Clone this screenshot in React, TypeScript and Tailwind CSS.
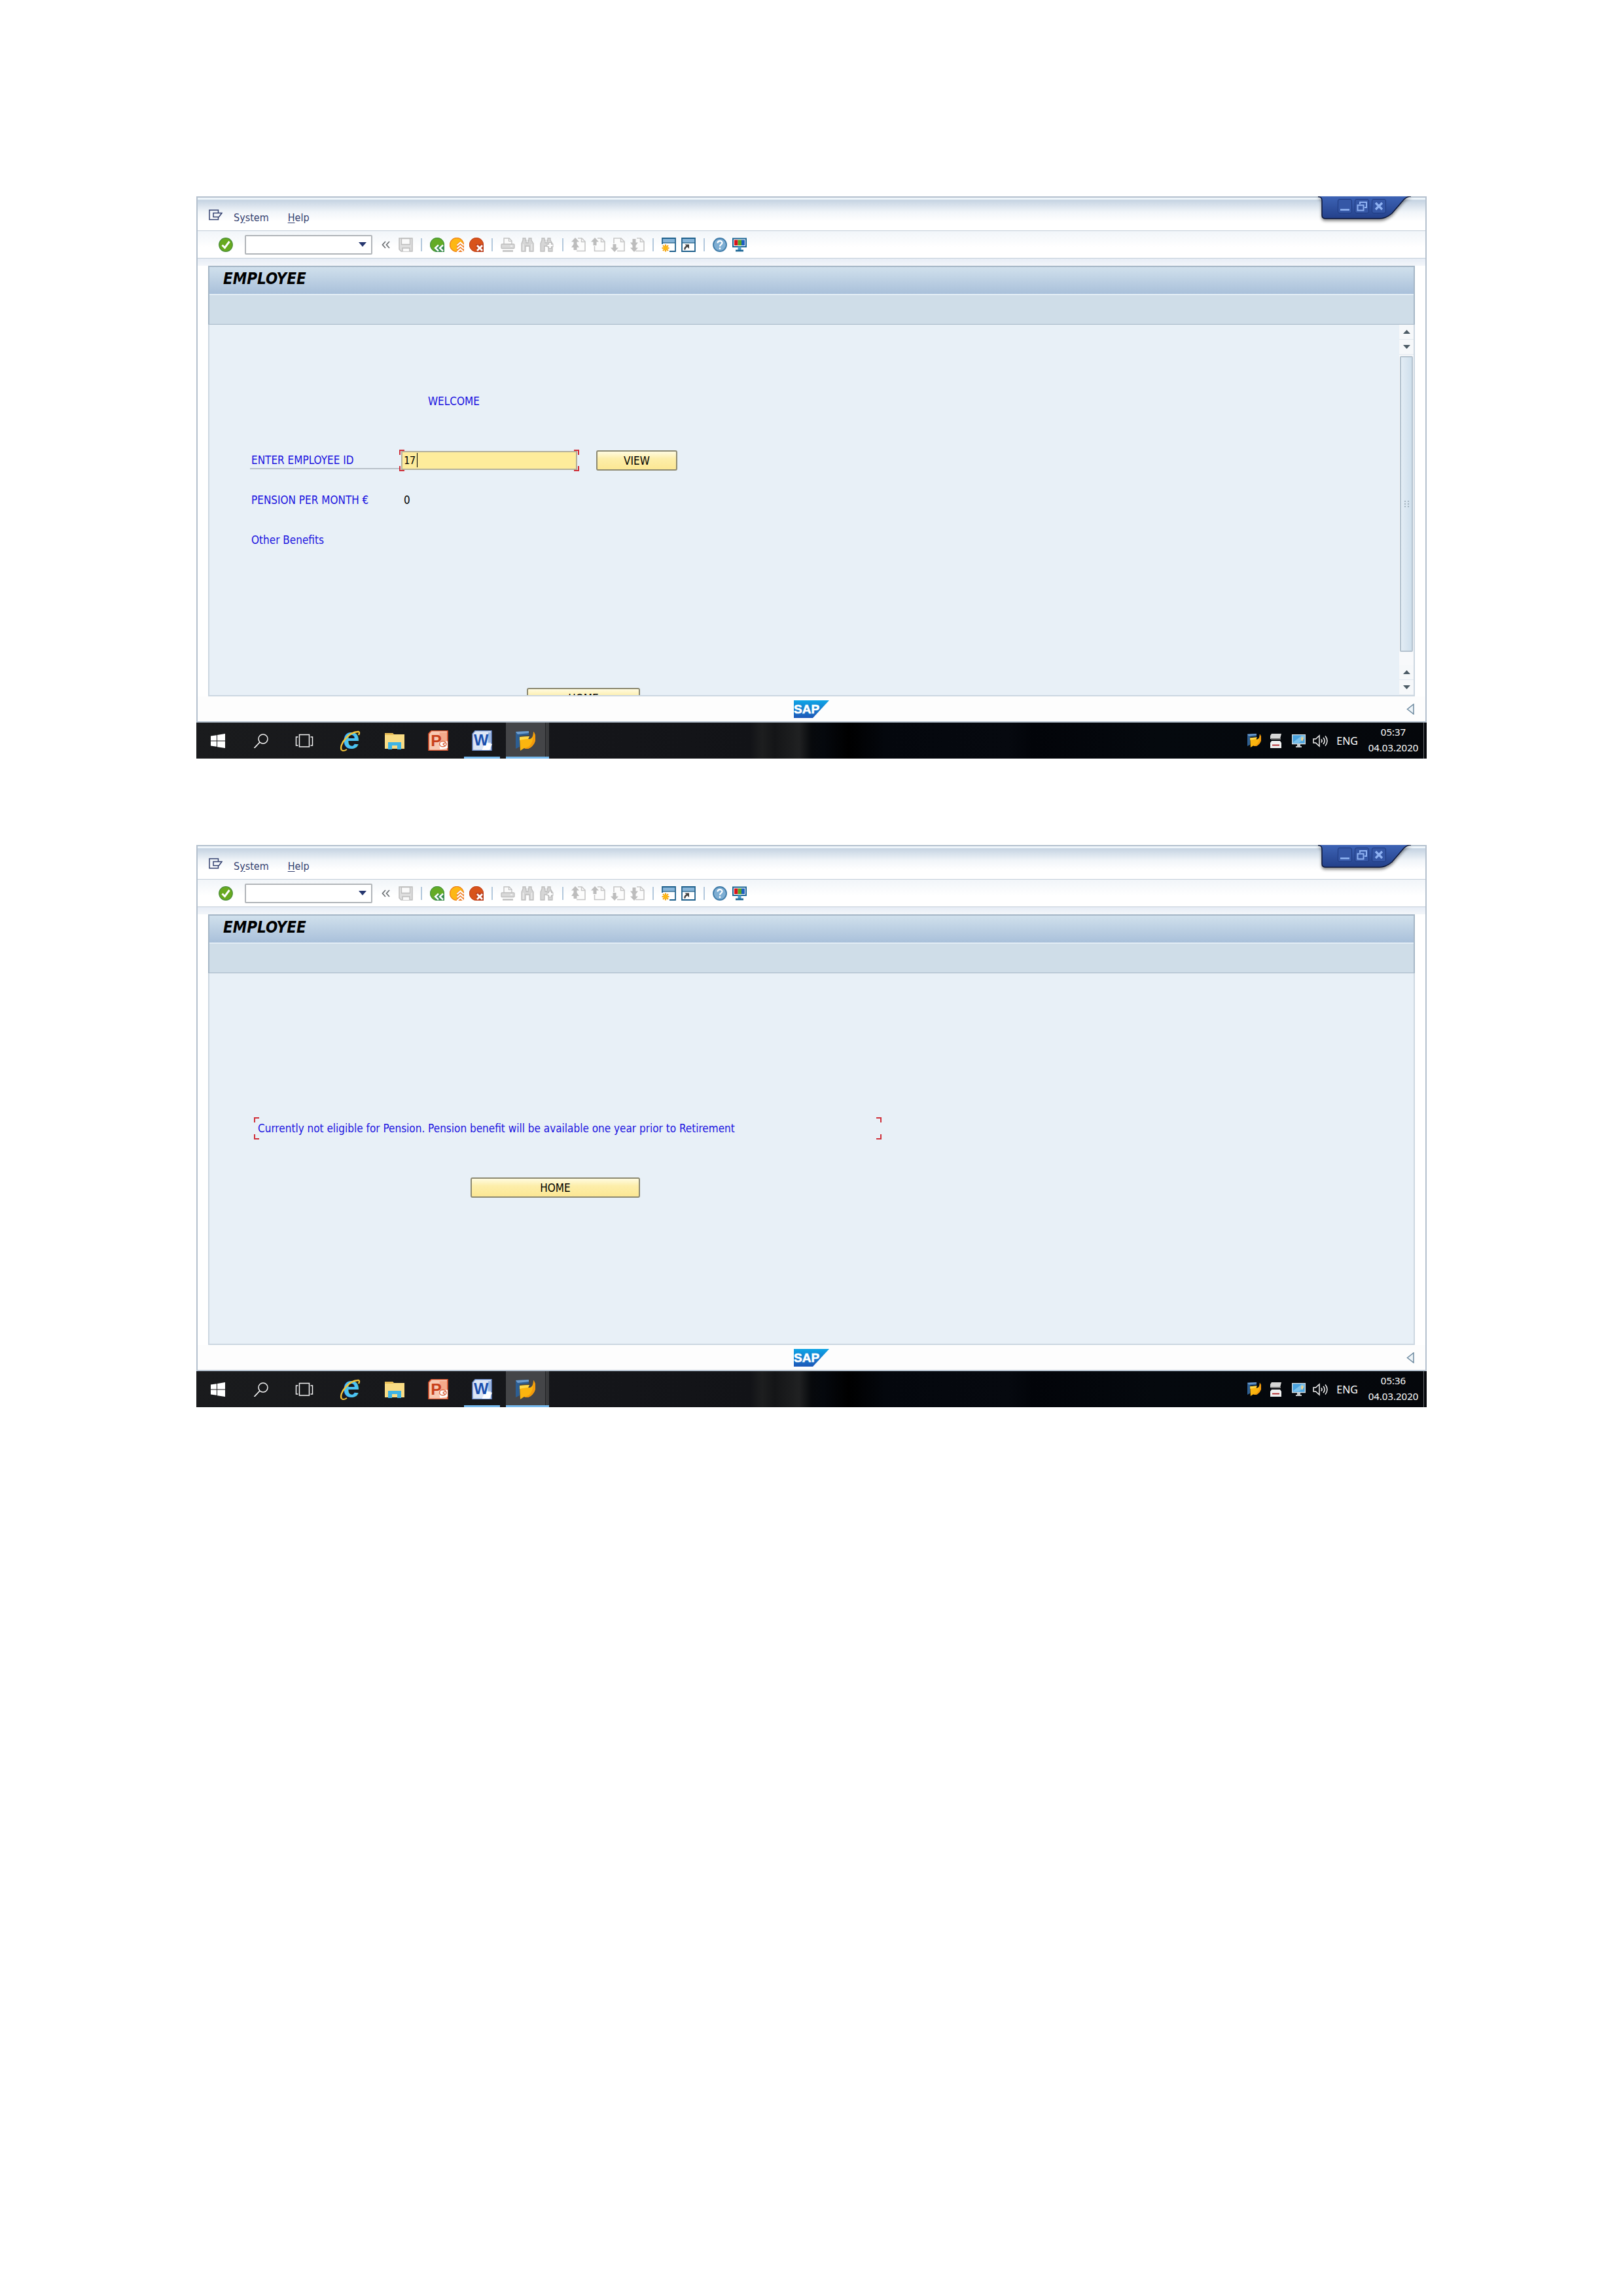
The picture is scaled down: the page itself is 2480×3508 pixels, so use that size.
import React from "react";

type IconProps = { children: React.ReactNode; className?: string; box?: string };

function Svg({ children, className = "size-[22px]", box = "0 0 22 22" }: IconProps) {
  return (
    <svg viewBox={box} className={className} fill="none" aria-hidden="true">
      {children}
    </svg>
  );
}

/* ---------- toolbar icons ---------- */

const CheckIcon = () => (
  <Svg>
    <circle cx="11" cy="11" r="10.3" fill="#68a91f" stroke="#4b8f3a" strokeWidth="1.2" />
    <path d="M5.5 11.5l4 4 7-9.5" stroke="#fff" strokeWidth="3" />
  </Svg>
);

const SaveIcon = () => (
  <Svg>
    <path d="M1 1h20v20H4l-3-3z" fill="#dedede" stroke="#bdbdbd" strokeWidth="1.5" />
    <path d="M4.500 1.500h13v9h-13z" fill="#fafafa" stroke="#bdbdbd" strokeWidth="1.300" />
    <path d="M6 21v-5h11v5" fill="#fafafa" stroke="#bdbdbd" strokeWidth="1.500" />
  </Svg>
);

const BackIcon = () => (
  <Svg>
    <path d="M22 22H11A11 11 0 1 1 22 11z" fill="#64ab25" />
    <path d="M21.500 21.500H11A10.500 10.500 0 1 1 21.500 11z" stroke="#3f8f4a" strokeWidth="1" />
    <path d="M21.500 12v9.500H9L6 16l5-4z" fill="#3c8d52" />
    <path d="M13 11.500l-5 4.500 5 4.500M20 11.500L15 16l5 4.500" stroke="#fff" strokeWidth="2.400" />
  </Svg>
);

const ExitIcon = () => (
  <Svg>
    <path d="M22 22H11A11 11 0 1 1 22 11z" fill="#fdb714" />
    <path d="M21.500 21.500H11A10.500 10.500 0 1 1 21.500 11z" stroke="#ee7f22" strokeWidth="1.200" />
    <path d="M11 10l5-4.500 6 5V22H11z" fill="#ef7d25" />
    <path d="M11.500 12l5-4.500 5 4.500M11.500 17l5-4.500 5 4.500M11.500 22l5-4.500 5 4.500" stroke="#fff" strokeWidth="2.200" />
  </Svg>
);

const CancelIcon = () => (
  <Svg>
    <path d="M22 22H11A11 11 0 1 1 22 11z" fill="#d8531b" />
    <path d="M21.500 21.500H11A10.500 10.500 0 1 1 21.500 11z" stroke="#bf4520" strokeWidth="1" />
    <path d="M10 10h12v12H12z" fill="#bb3f1e" />
    <path d="M12 12l8 8M20 12l-8 8" stroke="#fff" strokeWidth="2.800" />
  </Svg>
);

const PrintIcon = () => (
  <Svg>
    <path d="M5 10V1h8l4 4v5" fill="#fafafa" stroke="#c0c0c0" strokeWidth="1.400" />
    <path d="M12.500 1v4.500H17" stroke="#c0c0c0" strokeWidth="1.200" />
    <rect x="1" y="10" width="20" height="6.500" rx="1" fill="#d9d9d9" stroke="#bdbdbd" strokeWidth="1.300" />
    <path d="M3 20.500h16" stroke="#bdbdbd" strokeWidth="2.400" />
    <path d="M15 13h3" stroke="#fff" strokeWidth="1.200" />
  </Svg>
);

const FindIcon = () => (
  <Svg>
    <path d="M4 1h4v3h1v4h3V4h1V1h4v3l3 5v12h-6v-8H8v8H2V9l2-5z" fill="#d6d6d6" stroke="#bcbcbc" strokeWidth="1.300" />
    <path d="M4.500 10v10M17.500 10v10" stroke="#efefef" strokeWidth="1.300" />
  </Svg>
);

const FindNextIcon = () => (
  <Svg>
    <path d="M3 1h4v3h1v4h3V4h1V1h4v3l3 5v12h-6v-8H7v8H1V9l2-5z" fill="#d6d6d6" stroke="#bcbcbc" strokeWidth="1.300" />
    <path d="M15.500 7v10M10.500 12h10" stroke="#bcbcbc" strokeWidth="5" />
    <path d="M15.500 8v8M11.500 12h8" stroke="#fff" strokeWidth="2.600" />
  </Svg>
);

const PageOutline = () => (
  <>
    <path d="M10 1h6l5 5v14.500H8" fill="#fcfcfc" stroke="#c6c6c6" strokeWidth="1.600" />
    <path d="M15.500 1v5.500H21" stroke="#c6c6c6" strokeWidth="1.500" />
  </>
);

const FirstPageIcon = () => (
  <Svg>
    <PageOutline />
    <path d="M6 0l6 6.500H8.500V10l3.500 5H8.500v4h-5v-4H0l3.500-5V6.500H0z" fill="#bdbdbd" />
  </Svg>
);

const PrevPageIcon = () => (
  <Svg>
    <path d="M10 1h6l5 5v14.500H5.500V13" fill="#fcfcfc" stroke="#c6c6c6" strokeWidth="1.600" />
    <path d="M15.500 1v5.500H21" stroke="#c6c6c6" strokeWidth="1.500" />
    <path d="M6 0l6 6.500H8.500V12h-5V6.500H0z" fill="#bdbdbd" />
  </Svg>
);

const NextPageIcon = () => (
  <Svg>
    <path d="M5 9V1h11l5 5v14.500H10" fill="#fcfcfc" stroke="#c6c6c6" strokeWidth="1.600" />
    <path d="M15.500 1v5.500H21" stroke="#c6c6c6" strokeWidth="1.500" />
    <path d="M6 22l6-6.500H8.500V10h-5v5.500H0z" fill="#bdbdbd" />
  </Svg>
);

const LastPageIcon = () => (
  <Svg>
    <PageOutline />
    <path d="M6 22l6-6.500H8.500V12L12 7.500H8.500V2h-5v5.500H0L3.500 12v3.500H0z" fill="#bdbdbd" />
  </Svg>
);

const NewSessionIcon = () => (
  <Svg>
    <path d="M1 10V1h20v20h-9" fill="#fff" stroke="#1d5f8c" strokeWidth="1.800" />
    <path d="M2 2h18v5.500H2z" fill="#86b4d8" />
    <path d="M1 8h20" stroke="#1d5f8c" strokeWidth="1.400" />
    <path d="M6 10.500v11M.5 16h11M2 12l8 8M10 12l-8 8" stroke="#f5a614" strokeWidth="2.200" />
    <circle cx="6" cy="16" r="3" fill="#fdb913" />
  </Svg>
);

const ShortcutIcon = () => (
  <Svg>
    <path d="M1 1h20v20H1z" fill="#fff" stroke="#1d5f8c" strokeWidth="1.800" />
    <path d="M2 2h18v5.500H2z" fill="#86b4d8" />
    <path d="M1 8h20" stroke="#1d5f8c" strokeWidth="1.400" />
    <path d="M5.500 18.500c-.5-3 1-4.500 4-5.500" stroke="#444" strokeWidth="2.400" />
    <path d="M5.500 10.500h6.500V17z" fill="#444" />
  </Svg>
);

const HelpIcon = () => (
  <Svg>
    <circle cx="11" cy="11" r="10" fill="#7eaed3" stroke="#3f7ba8" strokeWidth="1.800" />
    <path d="M7.500 8.500c0-4.500 7-4.500 7-.5 0 2.800-3.500 2.500-3.500 5.500" stroke="#fff" strokeWidth="2.200" />
    <circle cx="11" cy="16.700" r="1.400" fill="#fff" />
  </Svg>
);

const LayoutIcon = () => (
  <Svg>
    <path d="M1 1.500h20v12.500H1z" fill="#fff" stroke="#1c6695" strokeWidth="2" />
    <path d="M3 3.500h5.500v8.500H3z" fill="#d8141c" />
    <path d="M8.500 3.500h5.500v8.500H8.500z" fill="#56a526" />
    <path d="M14 3.500h5v8.500h-5z" fill="#1d5ec0" />
    <path d="M8.500 14h5v5h-5z" fill="#4b9dcc" />
    <path d="M5 20h12" stroke="#1c6695" strokeWidth="2.800" />
  </Svg>
);

/* ---------- taskbar icons ---------- */

function SapGuiIcon({ className }: { className: string }) {
  return (
    <Svg className={className} box="0 0 30 30">
      <path d="M0 1l20-1v6L6 7v17l-6 3z" fill="#2d5e92" />
      <path d="M0 1l20-1v3L3 5z" fill="#6d9ccd" />
      <path d="M6 9l15-1-2 4c5 1 8-3 8-11 5 5 4 16-1 21-4 5-9 6-13 4l-6 4z" fill="#fbb50f" />
      <path d="M27 1c5 5 4 16-1 21-4 5-9 6-13 4 9-1 14-7 14-25z" fill="#f39a0c" />
      <path d="M6 9l15-1-2 4c-4 0-9 1-13 2z" fill="#ffd848" />
    </Svg>
  );
}

const WindowsIcon = () => (
  <Svg>
    <path d="M0 3.500l9-1.200v8.200H0zM10 2l12-2v10.500H10zM0 11.500h9v8.200L0 18.500zM10 11.500h12V22l-12-1.800z" fill="#fff" />
  </Svg>
);

const SearchIcon = () => (
  <Svg>
    <circle cx="14" cy="8" r="7" stroke="#f2f2f2" strokeWidth="1.500" />
    <path d="M9 13l-8.500 9" stroke="#f2f2f2" strokeWidth="1.700" />
  </Svg>
);

const TaskViewIcon = () => (
  <Svg className="h-[22px] w-[28px]" box="0 0 28 22">
    <path d="M6.500 1.500h15v18.500h-15zM4.500 5h-3v13h3M23.500 5h3v13h-3" stroke="#f2f2f2" strokeWidth="1.500" />
  </Svg>
);

const ExplorerIcon = () => (
  <Svg className="size-[32px] overflow-visible" box="0 0 32 32">
    <text x="4" y="28" fontFamily="Liberation Sans, sans-serif" fontWeight="700" fontSize="46" fill="#4cc3f1">
      e
    </text>
    <path d="M2 30C-3 22 14 1 28 2c2 1 1 3 0 5" stroke="#f5c53a" strokeWidth="2.400" />
    <path d="M2 30c2 2 5 1 8-1" stroke="#f5c53a" strokeWidth="2" />
  </Svg>
);

const FolderIcon = () => (
  <Svg className="h-[26px] w-[30px]" box="0 0 30 26">
    <path d="M0 1h12l2 2h16v22H0z" fill="#f9dc84" />
    <path d="M0 1h12l2 3H0z" fill="#e8bd55" />
    <path d="M5 26V15h20v11h-6v-6h-8v6z" fill="#3fb4e5" />
  </Svg>
);

const PowerPointIcon = () => (
  <Svg className="size-[31px]" box="0 0 30 30">
    <path d="M5 .5h24v29H1V5z" fill="#f7c9b3" stroke="#d9532c" strokeWidth="1.600" />
    <path d="M17 3h11v13H17z" fill="#f4a98a" />
    <path d="M16 18l13-2v10l-11 2z" fill="#fff" />
    <text x="4" y="23" fontFamily="Liberation Sans, sans-serif" fontWeight="700" fontSize="24" fill="#c8401b">
      P
    </text>
    <ellipse cx="22" cy="20" rx="5" ry="4" fill="#fff" stroke="#dd6a45" strokeWidth="1.500" />
    <path d="M22 20l4-2M22 20l3 3" stroke="#dd6a45" strokeWidth="1.500" />
  </Svg>
);

const WordIcon = () => (
  <Svg className="size-[31px]" box="0 0 30 30">
    <path d="M5 .5h24v29H1V5z" fill="#dce6f6" stroke="#6d8fd0" strokeWidth="1.400" />
    <path d="M24 3h4v15h-4z" fill="#9db8e2" />
    <path d="M20 18l10 2-4 9H15z" fill="#fff" />
    <text x="3" y="22" fontFamily="Liberation Sans, sans-serif" fontWeight="700" fontSize="23" fill="#1a4fae">
      W
    </text>
  </Svg>
);

const PrinterTrayIcon = () => (
  <Svg className="h-[22px] w-[19px]" box="0 0 19 22">
    <path d="M3 0h15l-2 8H1V3z" fill="#d6d6d6" />
    <path d="M2 7h15v2H2z" fill="#777" />
    <path d="M3 11h13l2 3v8H1v-8z" fill="#f1f1f1" />
    <path d="M4 17.500h11" stroke="#b3262a" strokeWidth="1.800" />
  </Svg>
);

const MonitorTrayIcon = () => (
  <Svg className="h-[20px] w-[21px]" box="0 0 21 20">
    <path d="M.5.500h20v14H.5z" fill="#4aa3df" stroke="#d8dde0" strokeWidth="1.500" />
    <path d="M2 12L15 2h4v4l-8 7H2z" fill="#7cc2ec" />
    <path d="M15 3l3 3-2 5-2-3z" fill="#f1d28a" />
    <path d="M8 15h5v3h2v2H6v-2h2z" fill="#c5cacc" />
  </Svg>
);

const SpeakerIcon = () => (
  <Svg className="h-[20px] w-[23px]" box="0 0 23 20">
    <path d="M1 7h3.500L10 2v16l-5.500-5H1z" stroke="#f2f2f2" strokeWidth="1.500" />
    <path d="M13 7.500c1.200 1.500 1.200 3.500 0 5M16 5c2.500 3 2.500 7 0 10M19 2.500c4 4.500 4 10.500 0 15" stroke="#f2f2f2" strokeWidth="1.500" />
  </Svg>
);

/* ---------- shared pieces ---------- */

const toolGroups: { name: string; icon: React.ReactNode }[][] = [
  [
    { name: "Back", icon: <BackIcon /> },
    { name: "Exit", icon: <ExitIcon /> },
    { name: "Cancel", icon: <CancelIcon /> },
  ],
  [
    { name: "Print", icon: <PrintIcon /> },
    { name: "Find", icon: <FindIcon /> },
    { name: "Find next", icon: <FindNextIcon /> },
  ],
  [
    { name: "First page", icon: <FirstPageIcon /> },
    { name: "Previous page", icon: <PrevPageIcon /> },
    { name: "Next page", icon: <NextPageIcon /> },
    { name: "Last page", icon: <LastPageIcon /> },
  ],
  [
    { name: "New session", icon: <NewSessionIcon /> },
    { name: "Create shortcut", icon: <ShortcutIcon /> },
  ],
  [
    { name: "Help", icon: <HelpIcon /> },
    { name: "Customize layout", icon: <LayoutIcon /> },
  ],
];

function ToolButton({ name, children }: { name: string; children: React.ReactNode }) {
  return (
    <button type="button" aria-label={name} className="size-[22px] shrink-0">
      {children}
    </button>
  );
}

function WindowControls() {
  return (
    <div className="absolute top-0 right-[20px] h-[42px] w-[146px]">
      <svg viewBox="0 0 146 42" className="absolute inset-0 size-full drop-shadow-[0_3px_2px_rgba(0,0,0,0.45)]" aria-hidden="true">
        <defs>
          <linearGradient id="tab" x1="0" y1="0" x2="0" y2="1">
            <stop offset="0" stopColor="#3d63b5" />
            <stop offset="1" stopColor="#23408a" />
          </linearGradient>
        </defs>
        <path d="M0 0C5 1 6 3 6 7v22c0 4 2 5 6 5h82c8 0 13-3 19-8L131 5c4-4 7-5 11-5z" fill="url(#tab)" />
        <path d="M0 .5C5 1 6 3 6 7v22c0 4 2 5 6 5h82c8 0 13-3 19-8L131 5c4-4 7-5 11-5" fill="none" stroke="#0c1638" strokeWidth="1.500" />
      </svg>
      <div className="relative flex gap-1 pt-1 pl-[30px]">
        <button type="button" aria-label="Minimize" className="size-[22px] rounded-[3px] border border-[#1f3a80] bg-[#3557a6]">
          <Svg className="size-[20px]" box="0 0 20 20">
            <path d="M3 15.500h14" stroke="#8fb2f2" strokeWidth="2.600" />
          </Svg>
        </button>
        <button type="button" aria-label="Restore" className="size-[22px] rounded-[3px] border border-[#1f3a80] bg-[#3557a6]">
          <Svg className="size-[20px]" box="0 0 20 20">
            <path d="M7 7V4h10v8h-3" stroke="#8fb2f2" strokeWidth="2" />
            <path d="M3.500 8.500h9v8h-9z" stroke="#8fb2f2" strokeWidth="2" />
          </Svg>
        </button>
        <button type="button" aria-label="Close" className="size-[22px] rounded-[3px] border border-[#1f3a80] bg-[#3557a6]">
          <Svg className="size-[20px]" box="0 0 20 20">
            <path d="M5 5l10 10M15 5L5 15" stroke="#8fb2f2" strokeWidth="3.200" />
          </Svg>
        </button>
      </div>
    </div>
  );
}

function MenuBar() {
  return (
    <nav className="flex h-[51px] items-start border-t-3 border-b border-t-[#eef5fa] border-b-[#c3ced9] bg-linear-to-b from-[#c9d6e4] from-5% via-[#f1f5f9] via-40% to-white to-70% pl-[17px] text-[16px] leading-[20px] text-[#33406f]">
      <button type="button" aria-label="Menu" className="mt-[15px]">
        <Svg className="h-[17px] w-[21px]" box="0 0 21 17">
          <path d="M14.500 5V1H1v14.500h13.500V12" stroke="#33406f" strokeWidth="1.500" />
          <path d="M7 5.500h13l-4.500 6H7z" stroke="#33406f" strokeWidth="1.500" />
        </Svg>
      </button>
      <button type="button" className="mt-[18px] ml-[17px]">
        S<span className="underline underline-offset-2">y</span>stem
      </button>
      <button type="button" className="mt-[18px] ml-[29px]">
        <span className="underline underline-offset-2">H</span>elp
      </button>
    </nav>
  );
}

function ToolBar() {
  return (
    <div role="toolbar" className="flex h-[42px] items-center gap-2 border-b border-[#c3ced9] bg-linear-to-b from-[#f1f5f9] to-white to-60% pl-[32px]">
      <ToolButton name="Enter">
        <CheckIcon />
      </ToolButton>
      <div className="ml-[10px] flex h-[30px] w-[195px] items-center rounded-[2px] border-2 border-[#b1b5b9] bg-white">
        <input aria-label="Command" className="h-full min-w-0 flex-1 px-1 text-[16px] outline-none" />
        <button type="button" aria-label="Command history" className="flex w-[26px] items-center justify-center">
          <Svg className="h-[7px] w-[12px]" box="0 0 12 7">
            <path d="M0 0h12L6 7z" fill="#26376f" />
          </Svg>
        </button>
      </div>
      <button type="button" aria-label="Collapse command field" className="ml-[6px] w-[18px]">
        <Svg className="h-[12px] w-[13px]" box="0 0 13 12">
          <path d="M6 1L1.500 6 6 11M12 1L7.500 6 12 11" stroke="#707478" strokeWidth="1.800" />
        </Svg>
      </button>
      <ToolButton name="Save">
        <SaveIcon />
      </ToolButton>
      {toolGroups.map((group, i) => (
        <React.Fragment key={i}>
          <span className="mx-1 h-[20px] w-[2px] bg-[#b4c9dd]" />
          {group.map((tool) => (
            <ToolButton key={tool.name} name={tool.name}>
              {tool.icon}
            </ToolButton>
          ))}
        </React.Fragment>
      ))}
    </div>
  );
}

function Arrow({ down = false }: { down?: boolean }) {
  return (
    <button
      type="button"
      aria-label={down ? "Scroll down" : "Scroll up"}
      className="flex h-[23px] shrink-0 items-center justify-center border-b border-[#e4eaf0] bg-[#f6f8fa]"
    >
      <Svg className="h-[6px] w-[11px]" box="0 0 11 6">
        <path d={down ? "M0 0h11L5.500 6z" : "M0 6h11L5.500 0z"} fill="#4d5c66" />
      </Svg>
    </button>
  );
}

function ScrollBar() {
  return (
    <div className="flex w-[22px] flex-col bg-[#f8f9fb]">
      <Arrow />
      <Arrow down />
      <div className="mx-px mt-[2px] flex flex-1 flex-col items-center justify-center gap-[2px] rounded-[2px] border-2 border-[#b5c3cf] bg-linear-to-r from-[#e3edf5] to-[#cfdfec]">
        {[0, 1, 2].map((n) => (
          <span key={n} className="flex gap-[3px]">
            <span className="size-[2px] bg-[#a5b4c0]" />
            <span className="size-[2px] bg-[#a5b4c0]" />
          </span>
        ))}
      </div>
      <div className="h-[20px]" />
      <Arrow />
      <Arrow down />
    </div>
  );
}

function FocusCorners() {
  return (
    <>
      <span className="absolute top-0 left-0 size-[8px] border-t-2 border-l-2 border-[#d0303a]" />
      <span className="absolute top-0 right-0 size-[8px] border-t-2 border-r-2 border-[#d0303a]" />
      <span className="absolute bottom-0 left-0 size-[8px] border-b-2 border-l-2 border-[#d0303a]" />
      <span className="absolute right-0 bottom-0 size-[8px] border-r-2 border-b-2 border-[#d0303a]" />
    </>
  );
}

function GoldButton({ children, className }: { children: string; className: string }) {
  return (
    <button
      type="button"
      className={
        "h-[31px] shrink-0 rounded-[3px] border-2 border-[#8d8a72] bg-linear-to-b from-[#fffbe0] via-[#fdeeaa] via-40% to-[#fce793] text-[17px] leading-[20px] text-black " +
        className
      }
    >
      {children}
    </button>
  );
}

function StatusBar() {
  return (
    <div className="flex h-[38px] items-center bg-[#fdfdfd] pr-[17px] pl-[911px]">
      <svg viewBox="0 0 54 27" className="h-[27px] w-[54px]" role="img" aria-label="SAP">
        <defs>
          <linearGradient id="sap" x1="0" y1="0" x2="0" y2="1">
            <stop offset="0" stopColor="#0fa5e6" />
            <stop offset="1" stopColor="#1d57b8" />
          </linearGradient>
        </defs>
        <path d="M0 0h54L29 27H0z" fill="url(#sap)" />
        <text x="0" y="20" fontFamily="Liberation Sans, sans-serif" fontWeight="700" fontSize="19" fill="#fff" stroke="#fff" strokeWidth="0.600">
          SAP
        </text>
      </svg>
      <button type="button" aria-label="Expand status bar" className="ml-auto">
        <Svg className="h-[17px] w-[12px]" box="0 0 12 17">
          <path d="M11 1v15L1.500 8.500z" fill="#eef4f8" stroke="#6f8ba0" strokeWidth="1.500" />
        </Svg>
      </button>
    </div>
  );
}

const pinned = [
  { name: "Start", icon: <WindowsIcon /> },
  { name: "Search", icon: <SearchIcon /> },
  { name: "Task view", icon: <TaskViewIcon /> },
];

const apps = [
  { name: "Internet Explorer", icon: <ExplorerIcon />, open: false },
  { name: "File Explorer", icon: <FolderIcon />, open: false },
  { name: "PowerPoint", icon: <PowerPointIcon />, open: false },
  { name: "Word", icon: <WordIcon />, open: true },
];

function TaskBar({ time }: { time: string }) {
  return (
    <footer className="flex h-[55px] items-stretch bg-linear-[90deg,#1a1b1d_0%,#15161a_30%,#121317_45%,#1d1e1f_46%,#141517_47%,#202122_49%,#07090c_50%,#05080d_51%,#000_53%,#04070d_56%,#06090f_66%,#020409_68%,#05090e_78%,#05070b_100%] font-['Noto_Sans',sans-serif] text-[15px] text-white">
      {pinned.map((item) => (
        <button key={item.name} type="button" aria-label={item.name} className="flex w-[66px] items-center justify-center">
          {item.icon}
        </button>
      ))}
      <div className="ml-1 flex">
        {apps.map((item) => (
          <button key={item.name} type="button" aria-label={item.name} className="relative flex w-[67px] items-center justify-center">
            {item.icon}
            {item.open && <span className="absolute inset-x-[6px] bottom-0 h-[3px] bg-[#76b9ed]" />}
          </button>
        ))}
        <div className="ml-[3px] flex w-[66px] border-b-3 border-[#76b9ed] bg-[#3a3b3d]">
          <button type="button" aria-label="SAP Logon" className="flex w-[61px] items-center justify-center border-r border-[#232426] bg-[#444548] pt-[3px]">
            <SapGuiIcon className="size-[30px]" />
          </button>
        </div>
      </div>
      <div className="ml-auto flex items-center">
        <SapGuiIcon className="mr-[13px] size-[21px]" />
        <span className="mr-[15px]">
          <PrinterTrayIcon />
        </span>
        <span className="mr-[11px]">
          <MonitorTrayIcon />
        </span>
        <span className="mr-[13px]">
          <SpeakerIcon />
        </span>
        <span className="text-[16px]">ENG</span>
        <div className="ml-[15px] w-[78px] pb-[3px] text-center leading-[24px]">
          <div>{time}</div>
          <div>04.03.2020</div>
        </div>
        <span className="mr-[4px] ml-[7px] h-full w-px bg-[#6b6e72]" />
      </div>
    </footer>
  );
}

function SapWindow({ time, children, scroll = false }: { time: string; children: React.ReactNode; scroll?: boolean }) {
  return (
    <section className="relative">
      <div className="border-2 border-[#b4c1ce] bg-white">
        <MenuBar />
        <ToolBar />
        <div className="h-[11px] bg-linear-to-b from-[#e6ecf5] to-[#f3f6fa]" />
        <main className="mx-[16px]">
          <header className="border-2 border-b border-[#a5b6c6]">
            <h1 className="h-[43px] border-b-2 border-[#e3edf5] bg-linear-to-b from-[#d0e0ec] to-[#a9c0da] pl-[21px] text-[24px] leading-[37px] font-bold text-black italic">
              EMPLOYEE
            </h1>
            <div className="h-[44px] bg-[#cfdde8]" />
          </header>
          <div className="flex h-[568px] overflow-hidden border-2 border-t-0 border-[#ccd7e1] bg-[#e8f0f7] text-[17px] leading-[20px] text-[#1a12e0]">
            <div className="min-w-0 flex-1">{children}</div>
            {scroll && <ScrollBar />}
          </div>
        </main>
        <StatusBar />
      </div>
      <WindowControls />
      <TaskBar time={time} />
    </section>
  );
}

function PensionForm() {
  return (
    <form className="flex flex-col pt-[102px] pl-[62px]">
      <p className="ml-[272px] h-[30px] leading-[30px]">WELCOME</p>
      <div className="mt-[59px] flex h-[33px] items-center">
        <label htmlFor="employee-id" className="mb-[3px] h-[27px] w-[228px] self-end border-b-2 border-[#b9c2ca] pl-[2px] leading-[27px]">
          ENTER EMPLOYEE ID
        </label>
        <div className="relative h-[33px] w-[275px] px-[3px] py-[2px]">
          <FocusCorners />
          <input
            id="employee-id"
            defaultValue="17"
            className="block size-full border-2 border-[#b3b09a] bg-[#feec9b] pl-[2px] font-['DejaVu_Sans_Mono',monospace] text-[15px] text-black outline-none"
          />
          <span className="absolute top-[5px] left-[27px] h-[22px] w-px bg-black" />
        </div>
        <GoldButton className="ml-[26px] w-[124px]">VIEW</GoldButton>
      </div>
      <div className="mt-[29px] flex h-[31px] leading-[31px]">
        <span className="w-[235px] pl-[2px]">PENSION PER MONTH €</span>
        <output className="text-black">0</output>
      </div>
      <p className="mt-[30px] h-[31px] pl-[2px] leading-[31px]">Other Benefits</p>
      <GoldButton className="mt-[210px] ml-[423px] w-[173px]">HOME</GoldButton>
    </form>
  );
}

function NotEligible() {
  return (
    <div className="flex flex-col items-start pt-[220px] pl-[68px]">
      <p className="relative h-[34px] w-[959px] pl-[6px] leading-[34px]">
        <FocusCorners />
        Currently not eligible for Pension. Pension benefit will be available one year prior to Retirement
      </p>
      <GoldButton className="mt-[58px] ml-[331px] w-[259px]">HOME</GoldButton>
    </div>
  );
}

export default function App() {
  return (
    <div className="flex min-h-screen flex-col gap-[132px] bg-white px-[300px] pt-[300px] font-['DejaVu_Sans_Condensed','Noto_Sans',sans-serif]">
      <SapWindow time="05:37" scroll>
        <PensionForm />
      </SapWindow>
      <SapWindow time="05:36">
        <NotEligible />
      </SapWindow>
    </div>
  );
}
